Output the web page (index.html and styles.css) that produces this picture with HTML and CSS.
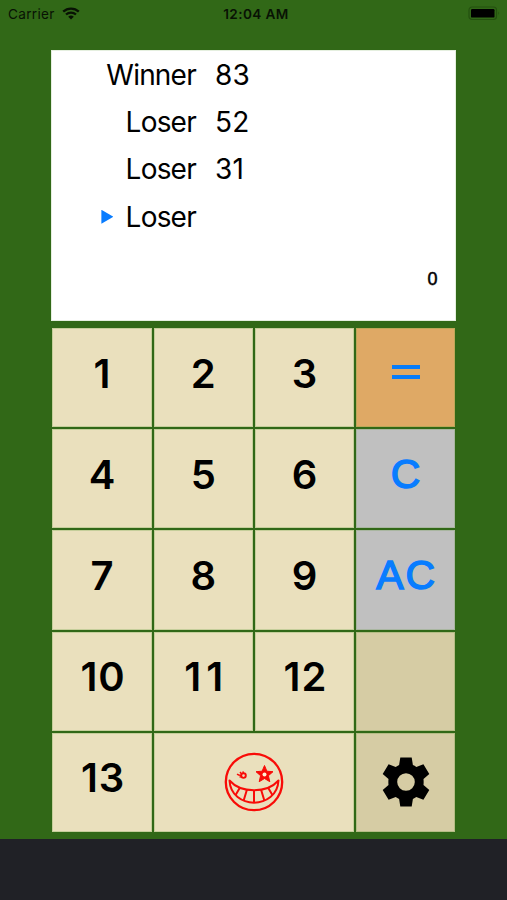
FILE: index.html
```html
<!DOCTYPE html>
<html lang="en">
<head>
    <meta charset="UTF-8">
    <meta name="viewport" content="width=device-width, initial-scale=1.0">
    <title>Score Calculator</title>
    <link rel="stylesheet" href="styles.css">
</head>
<body>
    <div class="status-bar">
        <div class="carrier">
            <span>Carrier</span>
            <svg class="wifi" viewBox="0 0 18 13" width="18" height="13">
                <path d="M1.2 4.6a11.5 11.5 0 0 1 15.6 0M4 7.5a7.5 7.5 0 0 1 10 0" fill="none" stroke="#081204" stroke-width="2.3"/>
                <path d="M9 12.6 6.2 9.8a4 4 0 0 1 5.6 0z" fill="#081204"/>
            </svg>
        </div>
        <div class="time">12:04 AM</div>
        <svg class="battery" viewBox="0 0 33 15" width="33" height="15">
            <rect x="1" y="1" width="27.5" height="12.5" rx="3" fill="none" stroke="#24500f" stroke-width="1.2"/>
            <rect x="3" y="3" width="23.5" height="8.6" rx="1.2" fill="#000"/>
            <path d="M30.3 5.2q1.8 2 0 4z" fill="#24500f"/>
        </svg>
    </div>

    <div class="calculator">
        <div class="display">
            <div class="row"><span class="arrow"></span><span class="name winner">Winner</span><span class="score">83</span></div>
            <div class="row"><span class="arrow"></span><span class="name">Loser</span><span class="score">52</span></div>
            <div class="row"><span class="arrow"></span><span class="name">Loser</span><span class="score">31</span></div>
            <div class="row"><span class="arrow active"></span><span class="name">Loser</span><span class="score"></span></div>
            <div class="total" id="total">0</div>
        </div>

        <div class="keys">
            <button>1</button>
            <button>2</button>
            <button>3</button>
            <button class="equals" aria-label="equals">
                <svg viewBox="0 0 28 14" width="28" height="14">
                    <path d="M0 2h28M0 12h28" stroke="#087cf8" stroke-width="4"/>
                </svg>
            </button>
            <button>4</button>
            <button>5</button>
            <button>6</button>
            <button class="clear">C</button>
            <button>7</button>
            <button>8</button>
            <button>9</button>
            <button class="clear all">AC</button>
            <button class="double">10</button>
            <button class="double eleven">11</button>
            <button class="double">12</button>
            <button class="blank"></button>
            <button class="double">13</button>
            <button class="joker" aria-label="joker">
                <svg viewBox="0 0 60 60" width="60" height="60" fill="none" stroke="#f80c08" stroke-width="2">
                    <circle cx="30" cy="30" r="28.2" stroke-width="2.3"/>
                    <path d="M5.5 28.5C17 41.5 43 41.5 54.5 28.5C53 58 7 58 5.5 28.5z" stroke-linejoin="round"/>
                    <path d="M16 35.5 11.6 43M23 37.5 19.5 49M30 38v13M37 37.5 40.5 49M44 35.5 48.4 43"/>
                    <path d="M40.5 13.5 42.9 19.2 49 19.7 44.4 23.7 45.8 29.7 40.5 26.5 35.2 29.7 36.6 23.7 32 19.7 38.1 19.2z" fill="#f80c08" stroke-width="1"/>
                    <circle cx="40.5" cy="22.5" r="2" fill="#fff1d5" stroke="none"/>
                    <circle cx="19.500" cy="23.600" r="2.300" stroke-width="1.900"/>
                    <path d="M13 22.200q2.500 1.600 4.500 1M16 20l1.800 2.200M19 19.400l.3 2M15.500 25.200l2-.6" stroke-width="1.400"/>
                </svg>
            </button>
            <button class="settings" aria-label="settings">
                <svg viewBox="0 0 48 50" width="48" height="50">
                    <path fill="#000" fill-rule="evenodd" d="M18.300.500h11.400l1.200 7.500q1.800.8 3.400 1.900l7.100-2.700 5.900 9.700-5.800 5q.3 3.100 0 6.200l5.800 5-5.900 9.700-7.100-2.700q-1.600 1.100-3.400 1.900l-1.200 7.500H18.300l-1.200-7.500q-1.800-.8-3.400-1.900l-7.100 2.700-5.900-9.700 5.800-5q-.3-3.100 0-6.200l-5.800-5 5.900-9.700 7.100 2.700q1.600-1.100 3.400-1.900zM24 16.200a8.800 8.800 0 1 0 0 17.600 8.800 8.800 0 1 0 0-17.600z"/>
                </svg>
            </button>
        </div>
    </div>

    <div class="footer"></div>
</body>
</html>
```
FILE: styles.css
```css
* {
    box-sizing: border-box;
}

body {
    display: flex;
    flex-direction: column;
    height: 900px;
    margin: 0;
    overflow: hidden;
    background-color: #316817;
    font-family: Inter, "Liberation Sans", sans-serif;
    color: #000;
}

.status-bar {
    display: grid;
    grid-template-columns: 1fr auto 1fr;
    align-items: center;
    height: 27px;
    padding: 0 6px 0 8px;
    font-size: 13.6px;
    color: #081204;
}

.carrier {
    display: flex;
    align-items: center;
    gap: 7px;
    letter-spacing: 0.3px;
}

.time {
    padding-left: 3px;
    font-weight: 600;
    letter-spacing: 0.4px;
}

.battery {
    justify-self: end;
}

.calculator {
    display: flex;
    flex-direction: column;
    gap: 7px;
    width: 405px;
    height: 812px;
    margin-left: 51.4px;
    padding-top: 23px;
}

.display {
    height: 271px;
    background-color: #fff;
    border: 1px solid #e5efdf;
}

.row {
    display: flex;
    align-items: center;
    height: 47.4px;
    font-size: 28px;
    letter-spacing: -0.8px;
}

.arrow {
    width: 12px;
    height: 14px;
    margin-left: 49px;
}

.arrow.active {
    background-color: #087cff;
    clip-path: polygon(0 0, 100% 50%, 0 100%);
}

.name {
    width: 82.5px;
    text-align: right;
}

.winner {
    margin-left: -10px;
    width: 92.5px;
}

.score {
    margin-left: 19px;
    letter-spacing: 0.3px;
}

.total {
    margin: 27px 18px 0;
    font-family: "Liberation Sans", Arial, sans-serif;
    font-size: 18px;
    -webkit-text-stroke: 0.5px currentColor;
    line-height: 22px;
    text-align: right;
}

.keys {
    display: grid;
    grid-template-columns: repeat(4, 99.2px);
    grid-auto-rows: 99.2px;
    gap: 2px;
    margin-left: 1.1px;
}

button {
    display: flex;
    align-items: center;
    justify-content: center;
    padding: 0 0 9px;
    border: 1px solid #c5ce9a;
    background-color: #eae0bd;
    color: #000;
    font-family: Inter, "Liberation Sans", sans-serif;
    font-size: 40px;
    font-weight: 600;
    cursor: pointer;
}

.double {
    padding-left: 2px;
    letter-spacing: 1px;
}

.eleven {
    padding-left: 6px;
    letter-spacing: 5px;
}

.equals {
    padding-bottom: 11px;
    background-color: #dfa965;
    border-color: #bda858;
}

.clear {
    background-color: #c0c0c0;
    border-color: #a9b6a0;
    color: #087cff;
    font-family: "Liberation Sans", Arial, sans-serif;
    font-size: 41px;
    font-weight: 400;
    -webkit-text-stroke: 1.5px currentColor;
}

.all {
    padding-left: 2px;
    letter-spacing: 2px;
}

.blank, .settings {
    background-color: #d6cca4;
    border-color: #b5bd85;
}

.joker {
    grid-column: span 2;
}

.joker, .settings {
    padding-bottom: 0;
}

.footer {
    flex: 1;
    background-color: #202126;
}
```
